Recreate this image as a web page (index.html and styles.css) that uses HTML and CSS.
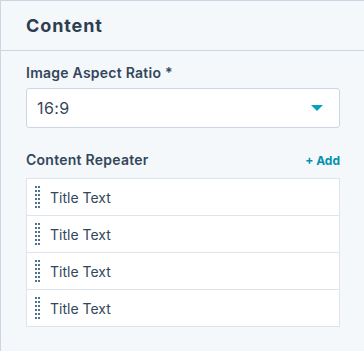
FILE: index.html
```html
<!DOCTYPE html>
<html lang="en">
<head>
    <meta charset="UTF-8">
    <meta name="viewport" content="width=device-width, initial-scale=1.0">
    <title>Content</title>
    <link rel="stylesheet" href="styles.css">
</head>
<body>
    <div class="panel">
        <div class="panel-header">
            <h2>Content</h2>
        </div>
        <div class="panel-body">
            <div class="field">
                <label class="field-label">Image Aspect Ratio *</label>
                <div class="select">
                    <span class="select-value">16:9</span>
                    <span class="caret"></span>
                </div>
            </div>

            <div class="field repeater">
                <div class="repeater-head">
                    <span class="field-label">Content Repeater</span>
                    <a class="add-link" href="#">+ Add</a>
                </div>
                <ul class="repeater-list">
                    <li class="repeater-item"><span class="handle"></span><span class="item-title">Title Text</span></li>
                    <li class="repeater-item"><span class="handle"></span><span class="item-title">Title Text</span></li>
                    <li class="repeater-item"><span class="handle"></span><span class="item-title">Title Text</span></li>
                    <li class="repeater-item"><span class="handle"></span><span class="item-title">Title Text</span></li>
                </ul>
            </div>
        </div>
    </div>
</body>
</html>
```

FILE: styles.css
```css
body {
    font-family: Inter, "Noto Sans", Arial, sans-serif;
    margin: 0;
    padding: 0;
    background-color: #f5f8fa;
    color: #33475b;
}
.panel {
    height: 351px;
    box-sizing: border-box;
    border-top: 1px solid #cbd6e2;
    border-left: 1px solid #cbd6e2;
    background-color: #f5f8fa;
}
.panel-header {
    height: 49px;
    display: flex;
    align-items: center;
    padding-left: 25px;
    border-bottom: 1px solid #cbd6e2;
}
.panel-header h2 {
    margin: 0;
    font-size: 18px;
    font-weight: 700;
    letter-spacing: 0.9px;
    color: #2d3e50;
}
.panel-body {
    padding: 12px 24px 0 25px;
}
.field-label {
    display: block;
    font-size: 14px;
    font-weight: 600;
    line-height: 20px;
    letter-spacing: 0.25px;
    color: #33475b;
}
.field > .field-label {
    margin-bottom: 5px;
}
.select {
    height: 38px;
    display: flex;
    align-items: center;
    justify-content: space-between;
    padding: 0 16px 0 10px;
    background-color: #fff;
    border: 1px solid #cbd6e2;
    border-radius: 3px;
}
.select-value {
    font-size: 16px;
    letter-spacing: 0.4px;
    color: #33475b;
}
.caret {
    width: 0;
    height: 0;
    border-left: 6px solid transparent;
    border-right: 6px solid transparent;
    border-top: 6px solid #00a4bd;
}
.repeater {
    margin-top: 22px;
}
.repeater-head {
    display: flex;
    justify-content: space-between;
    align-items: center;
    height: 20px;
    margin-bottom: 8px;
}
.add-link {
    font-size: 12px;
    font-weight: 700;
    color: #0091ae;
    text-decoration: none;
}
.repeater-list {
    list-style: none;
    margin: 0;
    padding: 0;
    border: 1px solid #dfe3eb;
    border-bottom: none;
    background-color: #fff;
}
.repeater-item {
    height: 36px;
    display: flex;
    align-items: center;
    padding-left: 8px;
    border-bottom: 1px solid #dfe3eb;
}
.handle {
    width: 5px;
    height: 22px;
    margin-right: 10px;
    background: linear-gradient(to right, #516f90 2px, transparent 2px, transparent 3px, #516f90 3px);
    -webkit-mask: linear-gradient(to bottom, #000 2px, transparent 2px) 0 0 / 5px 4px repeat-y;
    mask: linear-gradient(to bottom, #000 2px, transparent 2px) 0 0 / 5px 4px repeat-y;
}
.item-title {
    font-size: 14px;
    color: #33475b;
}
```
